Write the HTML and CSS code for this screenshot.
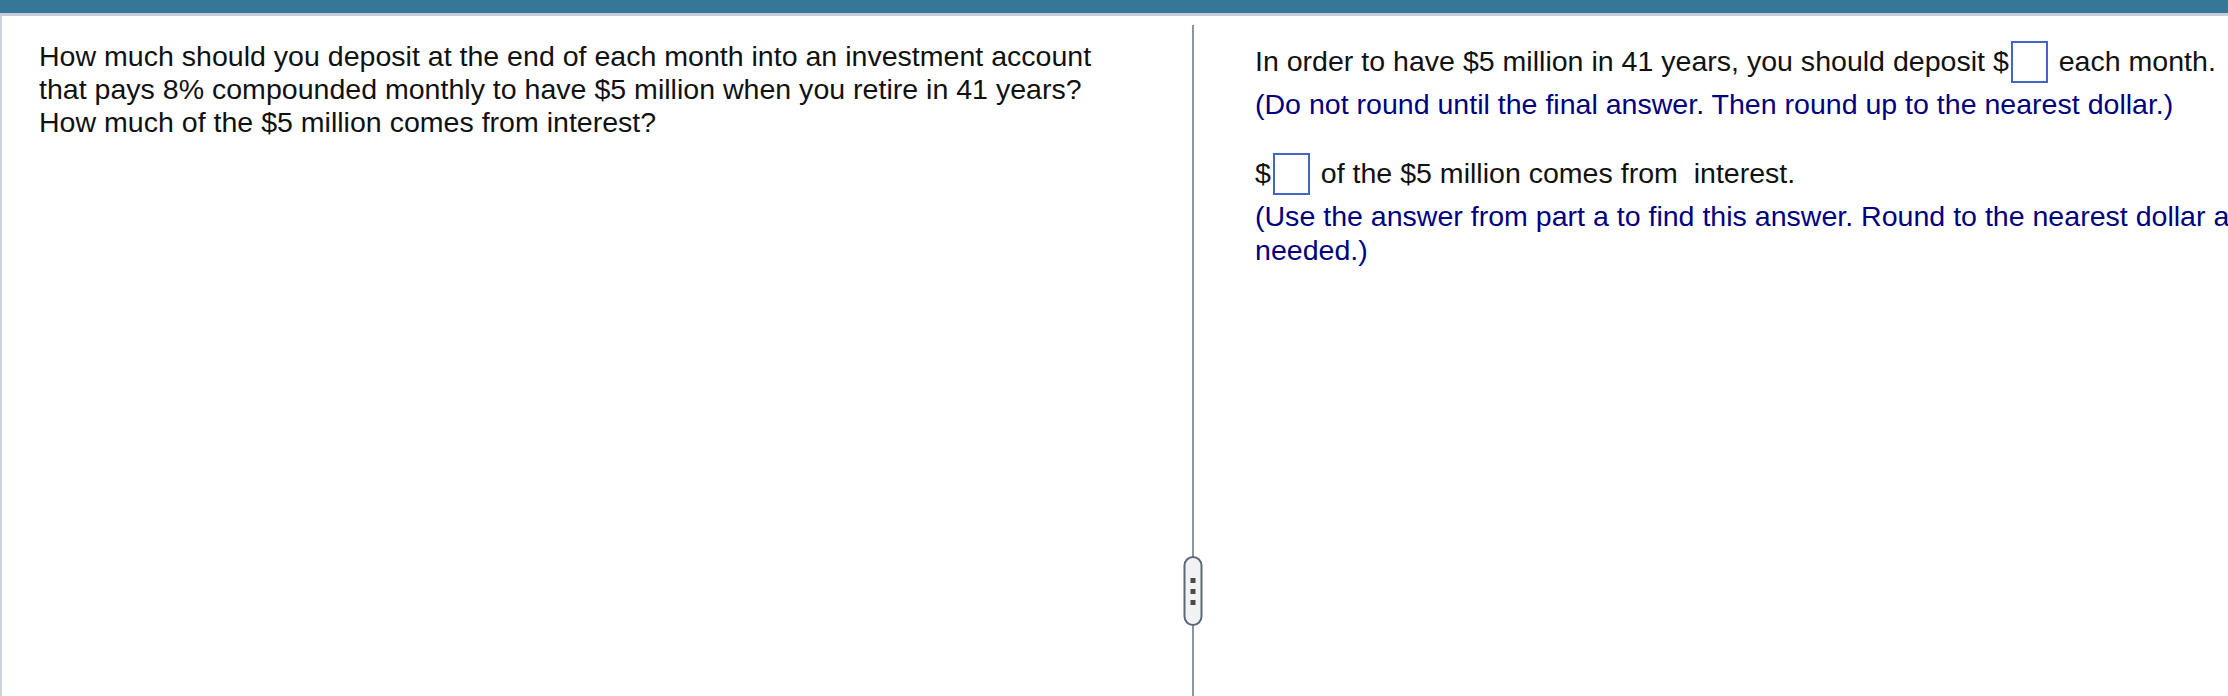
FILE: index.html
```html
<!DOCTYPE html>
<html lang="en">
<head>
<meta charset="utf-8">
<title>Question</title>
<link rel="stylesheet" href="styles.css">
</head>
<body>
<div class="topbar"></div>
<div class="main">
  <section class="question">
    <p class="qtext">How much should you deposit at the end of each month into an investment account<br>that pays 8% compounded monthly to have $5 million when you retire in 41 years?<br>How much of the $5 million comes from interest?</p>
  </section>
  <div class="splitter">
    <div class="handle"><span class="dot"></span><span class="dot"></span><span class="dot"></span></div>
  </div>
  <section class="answer">
    <div class="answer-inner">
      <div class="part">
        <p class="stmt">In order to have $5 million in 41 years, you should deposit $<span class="box"></span> each month.</p>
        <p class="hint">(Do not round until the final answer. Then round up to the nearest dollar.)</p>
      </div>
      <div class="part part2">
        <p class="stmt">$<span class="box"></span> of the $5 million comes from &nbsp;interest.</p>
        <p class="hint">(Use the answer from part a to find this answer. Round to the nearest dollar as needed.)</p>
      </div>
    </div>
  </section>
</div>
</body>
</html>
```
FILE: styles.css
```css
html, body {
  margin: 0;
  padding: 0;
  background: #ffffff;
  overflow: hidden;
}
body {
  font-family: "Liberation Sans", Arial, sans-serif;
  font-size: 28.55px;
  line-height: 33.4px;
  color: #111111;
}
p { margin: 0; }

.topbar {
  height: 13px;
  background: #367797;
  border-bottom: 3px solid #c6ccd9;
}

.main {
  display: flex;
  height: calc(100vh - 16px);
  border-left: 2px solid #ccd2de;
}

.question {
  flex: none;
  width: 1153px;
  padding: 23.5px 0 0 37px;
}

.splitter {
  flex: none;
  position: relative;
  width: 2px;
  margin-top: 9px;
  background: #8b93a5;
}
.handle {
  position: absolute;
  top: 531px;
  left: 50%;
  transform: translateX(-50%);
  box-sizing: border-box;
  width: 19px;
  height: 70px;
  background: #f1f2f4;
  border: 2px solid #5d6877;
  border-radius: 10px;
  display: flex;
  flex-direction: column;
  align-items: center;
  justify-content: center;
  gap: 6px;
}
.dot {
  width: 5px;
  height: 5px;
  background: #4a4a4a;
}

.answer {
  flex: 1;
  min-width: 0;
  overflow: hidden;
  padding: 25px 0 0 61px;
}
.answer-inner {
  width: 1020px;
}
.box {
  display: inline-block;
  box-sizing: border-box;
  width: 37px;
  height: 42px;
  border: 2px solid #4166c6;
  vertical-align: -12px;
  margin: 0 3px 0 2px;
}
.hint {
  color: #000080;
  margin-top: 5px;
}
.part2 {
  margin-top: 32px;
}
```
